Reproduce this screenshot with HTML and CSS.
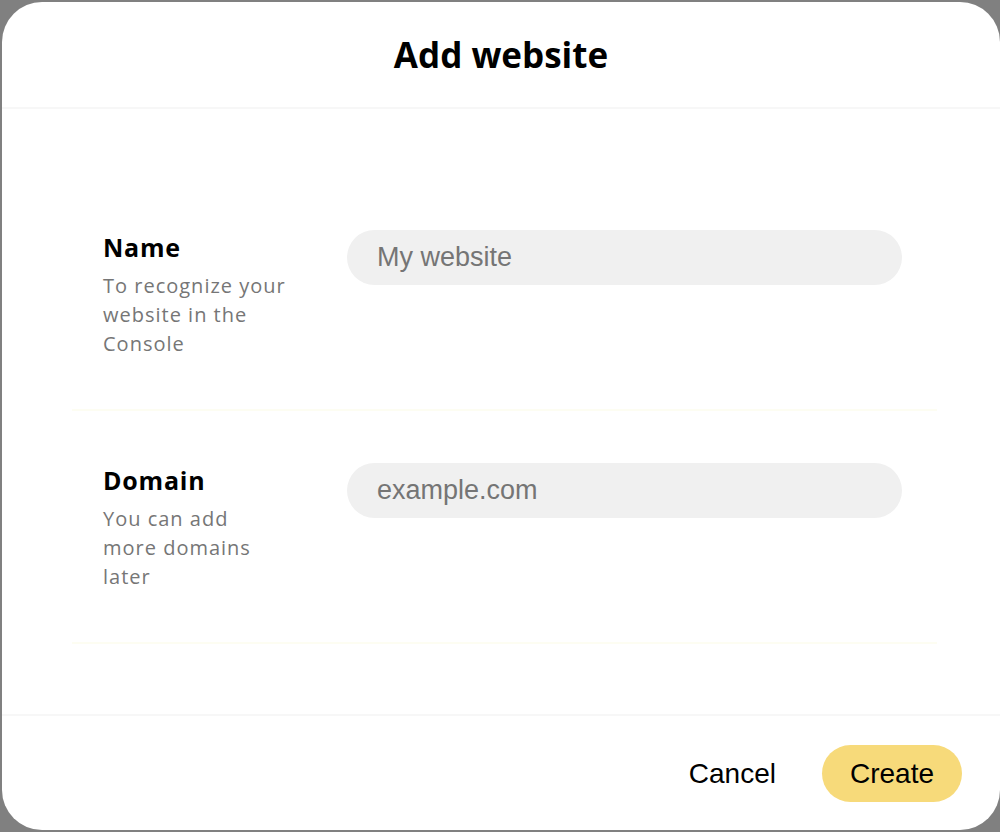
FILE: index.html
```html
<!DOCTYPE html>
<html lang="en">
<head>
  <meta charset="UTF-8" />
  <meta name="viewport" content="width=device-width, initial-scale=1.0" />
  <title>Add website</title>
  <link rel="stylesheet" href="styles.css">
</head>
<body>

  <div class="modal">
    <div class="modal-header">
      <h1>Add website</h1>
    </div>

    <div class="modal-body">
      <div class="field">
        <div class="field-info">
          <h2>Name</h2>
          <p>To recognize your website in the Console</p>
        </div>
        <input class="text-input" type="text" placeholder="My website" />
      </div>

      <div class="field">
        <div class="field-info">
          <h2>Domain</h2>
          <p>You can add more domains later</p>
        </div>
        <input class="text-input" type="text" placeholder="example.com" />
      </div>
    </div>

    <div class="modal-footer">
      <button class="btn btn-cancel">Cancel</button>
      <button class="btn btn-create">Create</button>
    </div>
  </div>

</body>
</html>
```

FILE: styles.css
```css
html, body {
  margin: 0;
  height: 100%;
}
body {
  background: #808080;
  font-family: 'Open Sans', Lato, sans-serif;
  overflow: hidden;
}
.modal {
  margin: 2px 0 0 2px;
  height: 828px;
  background: #fff;
  border-radius: 40px;
  display: flex;
  flex-direction: column;
}
.modal-header {
  height: 105px;
  border-bottom: 2px solid #f7f7f7;
  display: flex;
  align-items: center;
  justify-content: center;
}
.modal-header h1 {
  margin: 0;
  font-size: 35px;
  font-weight: 700;
  color: #000;
}
.modal-body {
  flex: 1;
  padding: 69px 63px 0 70px;
}
.field {
  display: flex;
  align-items: flex-start;
  gap: 60px;
  padding: 52px 35px 51px 31px;
  border-bottom: 2px solid #fdfdf2;
}
.field-info {
  width: 184px;
}
.field-info h2 {
  margin: 0;
  font-size: 25px;
  line-height: 34px;
  font-weight: 700;
  letter-spacing: 0.8px;
  color: #000;
}
.field-info p {
  margin: 7px 0 0;
  font-size: 20px;
  line-height: 29px;
  letter-spacing: 1px;
  color: #767676;
}
.text-input {
  flex: 1;
  height: 55px;
  box-sizing: border-box;
  border: none;
  border-radius: 28px;
  background: #f0f0f0;
  padding: 0 30px;
  font-family: 'Liberation Sans', Arial, sans-serif;
  font-size: 27px;
  color: #333;
  outline: none;
}
.text-input::placeholder {
  color: #757575;
}
.modal-footer {
  height: 116px;
  box-sizing: border-box;
  border-top: 2px solid #f7f7f7;
  display: flex;
  justify-content: flex-end;
  align-items: flex-start;
  gap: 18px;
  padding: 29px 38px 0 0;
}
.btn {
  height: 57px;
  padding: 0 28px;
  border: none;
  border-radius: 29px;
  font-family: 'Liberation Sans', Arial, sans-serif;
  font-size: 28px;
  color: #000;
  background: transparent;
}
.btn-create {
  background: #f7da7a;
}
```
